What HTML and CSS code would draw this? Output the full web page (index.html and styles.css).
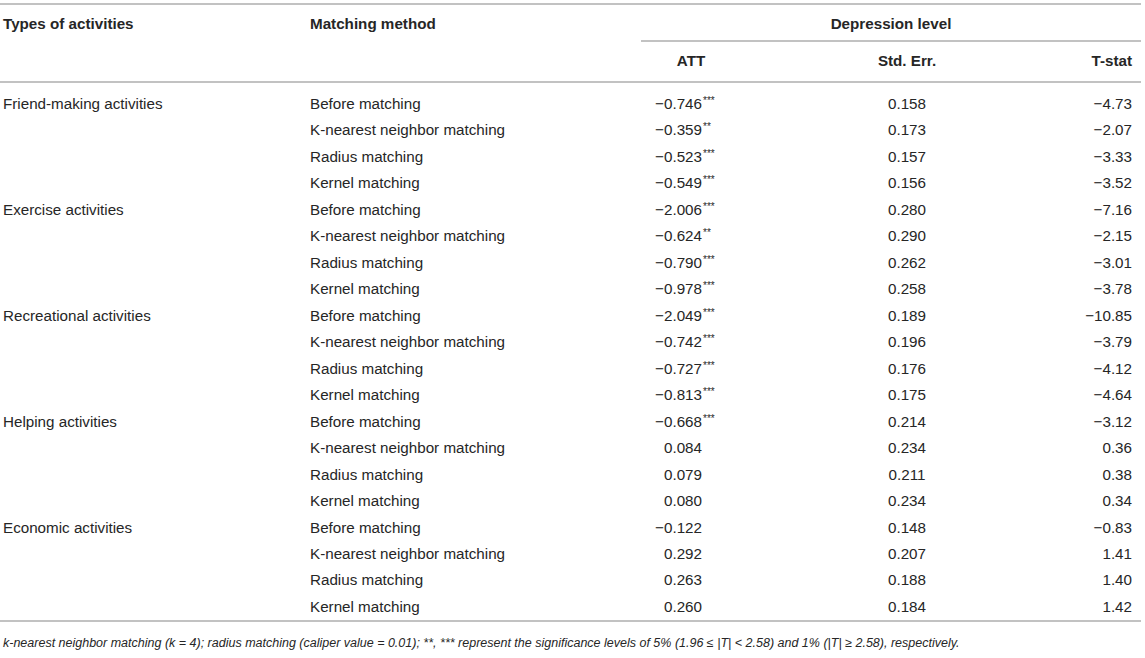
FILE: index.html
```html
<!DOCTYPE html>
<html lang="en">
<head>
<meta charset="utf-8">
<title>Depression level table</title>
<link rel="stylesheet" href="styles.css">
</head>
<body>
<div class="wrap">
<table class="tbl">
  <colgroup>
    <col class="c1"><col class="c2"><col class="c3"><col class="c4"><col class="c5">
  </colgroup>
  <thead>
    <tr class="h1">
      <th rowspan="2" class="left top">Types of activities</th>
      <th rowspan="2" class="left top">Matching method</th>
      <th colspan="3" class="group">Depression level</th>
    </tr>
    <tr class="h2">
      <th class="center">ATT</th>
      <th class="center">Std. Err.</th>
      <th class="right">T-stat</th>
    </tr>
  </thead>
  <tbody>
    <tr class="first"><td>Friend-making activities</td><td>Before matching</td><td class="att"><span class="v">−0.746</span><sup>***</sup></td><td class="center">0.158</td><td class="right">−4.73</td></tr>
    <tr><td></td><td>K-nearest neighbor matching</td><td class="att"><span class="v">−0.359</span><sup>**</sup></td><td class="center">0.173</td><td class="right">−2.07</td></tr>
    <tr><td></td><td>Radius matching</td><td class="att"><span class="v">−0.523</span><sup>***</sup></td><td class="center">0.157</td><td class="right">−3.33</td></tr>
    <tr><td></td><td>Kernel matching</td><td class="att"><span class="v">−0.549</span><sup>***</sup></td><td class="center">0.156</td><td class="right">−3.52</td></tr>
    <tr><td>Exercise activities</td><td>Before matching</td><td class="att"><span class="v">−2.006</span><sup>***</sup></td><td class="center">0.280</td><td class="right">−7.16</td></tr>
    <tr><td></td><td>K-nearest neighbor matching</td><td class="att"><span class="v">−0.624</span><sup>**</sup></td><td class="center">0.290</td><td class="right">−2.15</td></tr>
    <tr><td></td><td>Radius matching</td><td class="att"><span class="v">−0.790</span><sup>***</sup></td><td class="center">0.262</td><td class="right">−3.01</td></tr>
    <tr><td></td><td>Kernel matching</td><td class="att"><span class="v">−0.978</span><sup>***</sup></td><td class="center">0.258</td><td class="right">−3.78</td></tr>
    <tr><td>Recreational activities</td><td>Before matching</td><td class="att"><span class="v">−2.049</span><sup>***</sup></td><td class="center">0.189</td><td class="right">−10.85</td></tr>
    <tr><td></td><td>K-nearest neighbor matching</td><td class="att"><span class="v">−0.742</span><sup>***</sup></td><td class="center">0.196</td><td class="right">−3.79</td></tr>
    <tr><td></td><td>Radius matching</td><td class="att"><span class="v">−0.727</span><sup>***</sup></td><td class="center">0.176</td><td class="right">−4.12</td></tr>
    <tr><td></td><td>Kernel matching</td><td class="att"><span class="v">−0.813</span><sup>***</sup></td><td class="center">0.175</td><td class="right">−4.64</td></tr>
    <tr><td>Helping activities</td><td>Before matching</td><td class="att"><span class="v">−0.668</span><sup>***</sup></td><td class="center">0.214</td><td class="right">−3.12</td></tr>
    <tr><td></td><td>K-nearest neighbor matching</td><td class="att"><span class="v">0.084</span></td><td class="center">0.234</td><td class="right">0.36</td></tr>
    <tr><td></td><td>Radius matching</td><td class="att"><span class="v">0.079</span></td><td class="center">0.211</td><td class="right">0.38</td></tr>
    <tr><td></td><td>Kernel matching</td><td class="att"><span class="v">0.080</span></td><td class="center">0.234</td><td class="right">0.34</td></tr>
    <tr><td>Economic activities</td><td>Before matching</td><td class="att"><span class="v">−0.122</span></td><td class="center">0.148</td><td class="right">−0.83</td></tr>
    <tr><td></td><td>K-nearest neighbor matching</td><td class="att"><span class="v">0.292</span></td><td class="center">0.207</td><td class="right">1.41</td></tr>
    <tr><td></td><td>Radius matching</td><td class="att"><span class="v">0.263</span></td><td class="center">0.188</td><td class="right">1.40</td></tr>
    <tr class="last"><td></td><td>Kernel matching</td><td class="att"><span class="v">0.260</span></td><td class="center">0.184</td><td class="right">1.42</td></tr>
  </tbody>
</table>
<p class="note">k-nearest neighbor matching (k = 4); radius matching (caliper value = 0.01); **, *** represent the significance levels of 5% (1.96 ≤ |T| &lt; 2.58) and 1% (|T| ≥ 2.58), respectively.</p>
</div>
</body>
</html>
```
FILE: styles.css
```css
html, body {
  margin: 0;
  padding: 0;
  background: #ffffff;
}

body {
  font-family: "Liberation Sans", Arial, Helvetica, sans-serif;
  font-size: 15.2px;
  color: #262626;
}

.wrap {
  width: 1141px;
  padding-top: 3px;
}

.tbl {
  width: 1141px;
  border-collapse: separate;
  border-spacing: 0;
  table-layout: fixed;
  border-top: 2px solid #c2c2c2;
  border-bottom: 2px solid #c2c2c2;
}

.c1 { width: 307px; }
.c2 { width: 334px; }
.c3 { width: 100px; }
.c4 { width: 332px; }
.c5 { width: 68px; }

.tbl th {
  font-weight: bold;
  line-height: 18px;
  padding: 0 3px;
  white-space: nowrap;
}

.tbl .h1 th {
  padding-top: 10px;
  padding-bottom: 7px;
}

.tbl .h1 th.top {
  vertical-align: top;
  border-bottom: 2px solid #c2c2c2;
}

.tbl .h1 th.group {
  text-align: center;
  vertical-align: top;
  border-bottom: 2px solid #c2c2c2;
}

.tbl .h2 th {
  padding-top: 10px;
  padding-bottom: 11px;
  vertical-align: top;
  border-bottom: 2px solid #c2c2c2;
}

.left { text-align: left; }
.center { text-align: center; }
.right { text-align: right; }

.tbl td {
  line-height: 26.47px;
  padding: 0 3px;
  white-space: nowrap;
  vertical-align: top;
}

.tbl td.right,
.tbl th.right {
  padding-right: 9px;
}

.tbl .first td {
  padding-top: 8px;
}

.tbl td.att {
  padding: 0;
  text-align: left;
}

.tbl .first td.att {
  padding-top: 8px;
}

.v {
  display: inline-block;
  width: 61px;
  text-align: right;
}

.tbl sup {
  font-size: 10px;
  line-height: 0;
  vertical-align: 5px;
  margin-left: 1px;
}

.note {
  margin: 0;
  padding: 12px 3px 0;
  line-height: 18px;
  font-size: 12.5px;
  font-style: italic;
  white-space: nowrap;
}
```
